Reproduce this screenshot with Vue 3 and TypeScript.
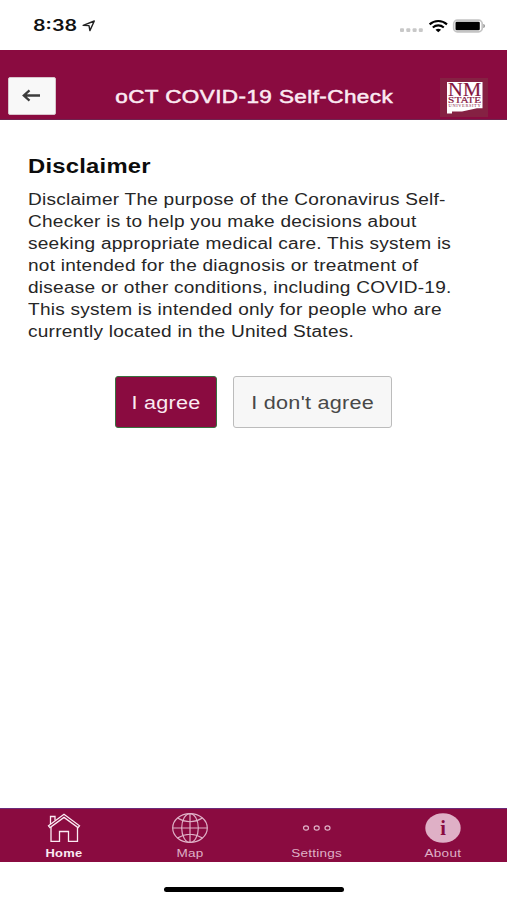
<script setup lang="ts">
import { ref } from 'vue'

type Tab = 'Home' | 'Map' | 'Settings' | 'About'

const tabs: Tab[] = ['Home', 'Map', 'Settings', 'About']
const active = ref<Tab>('Home')

const disclaimer: string[] = [
  'Disclaimer The purpose of the Coronavirus Self-',
  'Checker is to help you make decisions about',
  'seeking appropriate medical care. This system is',
  'not intended for the diagnosis or treatment of',
  'disease or other conditions, including COVID-19.',
  'This system is intended only for people who are',
  'currently located in the United States.',
]
</script>

<template>
  <div class="screen">
    <div class="status">
      <span class="time">8:38</span>
      <svg class="loc" width="14" height="12" viewBox="0 0 14 12">
        <path d="M1.2 5.4 12.3 1 7.9 10.6 7 5.6Z" fill="none" stroke="#222" stroke-width="1.4" stroke-linejoin="round" />
      </svg>
      <svg class="signal" width="88" height="14" viewBox="0 0 88 14">
        <g fill="#c8c8c8">
          <rect x="1" y="9.3" width="4" height="3.6" rx="1" />
          <rect x="7.3" y="9.3" width="4" height="3.6" rx="1" />
          <rect x="13.6" y="9.3" width="4" height="3.6" rx="1" />
          <rect x="19.8" y="9.3" width="4" height="3.6" rx="1" />
        </g>
        <g fill="none" stroke="#000" stroke-width="2.1">
          <path d="M30.6 5.4C35.6.9 43 .9 48 5.4" />
          <path d="M33.8 8.5C37 5.7 41.6 5.7 44.8 8.5" />
        </g>
        <path d="M36.5 10.8Q39.3 8.8 42.1 10.8L39.3 13.3Z" />
        <rect x="54.7" y="1.2" width="28.5" height="11.6" rx="3.6" fill="#fff" stroke="#c4c4c4" stroke-width="1.7" />
        <rect x="56.5" y="2.7" width="24.3" height="8.6" rx="1.3" />
        <path d="M84.7 5.2q2 1.7 0 3.6Z" fill="#888" stroke="#888" stroke-width=".5" />
      </svg>
    </div>

    <header class="bar">
      <button class="back" aria-label="Back">
        <svg width="20" height="14" viewBox="0 0 20 14" fill="none" stroke="#3c3c3c" stroke-width="2.3">
          <path d="M1.7 6.5H18M7.5 1.400 1.800 6.500 7.500 11.600" />
        </svg>
      </button>
      <h1 class="title"><span class="wide">oCT COVID-19 Self-Check</span></h1>
      <svg class="logo" width="48" height="39" viewBox="0 0 48 39">
        <rect width="48" height="39" fill="#852143" />
        <path d="M7 4H42.5V30.3H37L22 33.5H12V35.5H7Z" fill="#fff" />
        <g fill="#85153f" font-family="Liberation Serif, serif" text-anchor="middle">
          <text x="24.6" y="17.6" font-size="19" textLength="33" lengthAdjust="spacingAndGlyphs" stroke="#85153f" stroke-width=".2">NM</text>
          <text x="24.6" y="25" font-size="9" textLength="33" lengthAdjust="spacingAndGlyphs" stroke="#85153f" stroke-width=".2">STATE</text>
          <text x="24.6" y="29.2" font-size="4.4" textLength="32" lengthAdjust="spacing">UNIVERSITY</text>
        </g>
      </svg>
    </header>

    <main class="content">
      <h2 class="heading">Disclaimer</h2>
      <p class="copy">
        <span v-for="line in disclaimer" :key="line" class="line">{{ line }}</span>
      </p>
      <div class="actions">
        <button class="btn agree"><span class="wide">I agree</span></button>
        <button class="btn decline"><span class="wide">I don't agree</span></button>
      </div>
    </main>

    <nav class="tabs">
      <button
        v-for="tab in tabs"
        :key="tab"
        class="tab"
        :class="{ active: tab === active }"
        @click="active = tab"
      >
        <svg v-if="tab === 'Home'" class="icon" width="36" height="32" viewBox="0 0 36 32" fill="none" stroke="currentColor" stroke-width="1.3">
          <path d="M2.5 13.8 18 2.3 33.5 13.8 32 15.6 18 5.4 4 15.6Z" />
          <path d="M4.5 12V4.500H9V8.600" />
          <path d="M5 15V29.300H13.500V19.500H22.500V29.300H31.500V15" />
        </svg>
        <svg v-else-if="tab === 'Map'" class="icon" width="36" height="32" viewBox="0 0 36 32" fill="none" stroke="currentColor" stroke-width="1.2">
          <ellipse cx="18" cy="16" rx="17.3" ry="14.4" />
          <ellipse cx="18" cy="16" rx="8.3" ry="14.4" />
          <path d="M18 1.600V30.400M.7 16H35.300M5.500 6Q18 13.500 30.500 6M5.500 26Q18 18.500 30.500 26" />
        </svg>
        <svg v-else-if="tab === 'Settings'" class="icon" width="36" height="32" viewBox="0 0 36 32" fill="none" stroke="currentColor" stroke-width="1.2">
          <ellipse cx="7" cy="16" rx="2.5" ry="2.2" />
          <ellipse cx="17.7" cy="16" rx="2.5" ry="2.2" />
          <ellipse cx="28.5" cy="16" rx="2.5" ry="2.2" />
        </svg>
        <svg v-else class="icon" width="36" height="32" viewBox="0 0 36 32">
          <ellipse cx="18" cy="16" rx="17.7" ry="14.8" fill="currentColor" />
          <text x="18" y="22.7" text-anchor="middle" font-family="Liberation Serif, serif" font-weight="700" font-size="20.5" fill="#8a0b40">i</text>
        </svg>
        <span class="label">{{ tab }}</span>
      </button>
    </nav>

    <div class="home-area"><div class="indicator"></div></div>
  </div>
</template>

<style>
body {
  margin: 0;
  background: #fff;
}
</style>

<style scoped>
.screen {
  width: 507px;
  height: 900px;
  display: flex;
  flex-direction: column;
  overflow: hidden;
  background: #fff;
  font-family: 'Liberation Sans', Arial, sans-serif;
}
button {
  font-family: inherit;
  margin: 0;
}
.wide {
  display: inline-block;
  white-space: nowrap;
  transform: scaleX(1.235);
}
.status {
  height: 50px;
  flex: none;
  box-sizing: border-box;
  padding: 2px 20px 0 33px;
  display: flex;
  align-items: center;
}
.time {
  width: 49px;
  font: 600 15.5px/20px Inter, sans-serif;
  color: #111;
  transform: scaleX(1.27);
  transform-origin: left;
  white-space: nowrap;
}
.signal {
  margin-left: auto;
}
.bar {
  height: 70px;
  flex: none;
  box-sizing: border-box;
  padding: 27px 19px 0 8px;
  display: flex;
  align-items: flex-start;
  background: #8a0b40;
  border-bottom: 1px solid #6f2450;
}
.back {
  width: 48px;
  height: 38px;
  padding: 0;
  display: grid;
  place-items: center;
  background: #f8f8f8;
  border: 1px solid #d9c5cd;
  border-radius: 2px;
}
.title {
  flex: 1;
  margin: 9px 0 0;
  padding-right: 3px;
  text-align: center;
  font-size: 18px;
  line-height: 22px;
  font-weight: 400;
  letter-spacing: 0.33px;
  color: #fbeaf2;
  -webkit-text-stroke: 0.5px #fbeaf2;
}
.title .wide {
  transform: scaleX(1.25);
}
.logo {
  margin-left: -15px;
  margin-top: 1px;
}
.content {
  flex: 1;
  padding: 34px 28px 0;
}
.heading {
  margin: 0;
  font-size: 19.5px;
  line-height: 24px;
  letter-spacing: 0.2px;
  color: #0c0c0c;
  width: max-content;
  transform: scaleX(1.22);
  transform-origin: left;
}
.copy {
  margin: 10.500px 0 0;
  width: max-content;
  font-size: 15.6px;
  line-height: 22.15px;
  letter-spacing: 0.19px;
  color: #262626;
  transform: scaleX(1.223);
  transform-origin: left;
}
.line {
  display: block;
  white-space: nowrap;
}
.actions {
  display: flex;
  justify-content: center;
  gap: 16px;
  margin-top: 32.500px;
}
.btn {
  height: 52px;
  padding: 2px 0 0;
  border-radius: 3px;
  font-size: 17.5px;
  letter-spacing: 0.2px;
}
.agree {
  width: 102px;
  background: #8a0b40;
  color: #fbeaf2;
  border: 1px solid #38703f;
}
.decline {
  width: 159px;
  background: #f7f7f7;
  color: #484848;
  border: 1px solid #bcbcbc;
}
.tabs {
  height: 54px;
  flex: none;
  box-sizing: border-box;
  display: grid;
  grid-template-columns: repeat(4, 126.5px);
  padding-left: 0.5px;
  background: #8a0b40;
  border-top: 1px solid #6b2a78;
}
.tab {
  padding: 3px 0 0;
  border: 0;
  background: none;
  display: flex;
  flex-direction: column;
  align-items: center;
  color: #dfb0c6;
}
.tab.active {
  color: #fbeaf2;
}
.icon {
  display: block;
}
.label {
  margin-top: 3px;
  font-size: 11px;
  line-height: 13px;
  letter-spacing: 0.2px;
  transform: scaleX(1.23);
}
.active .label {
  font-weight: 700;
  font-size: 10.5px;
  letter-spacing: 0.2px;
}
.home-area {
  height: 38px;
  flex: none;
  display: flex;
  justify-content: center;
}
.indicator {
  width: 180px;
  height: 5px;
  margin-top: 25px;
  border-radius: 3px;
  background: #000;
}
</style>
